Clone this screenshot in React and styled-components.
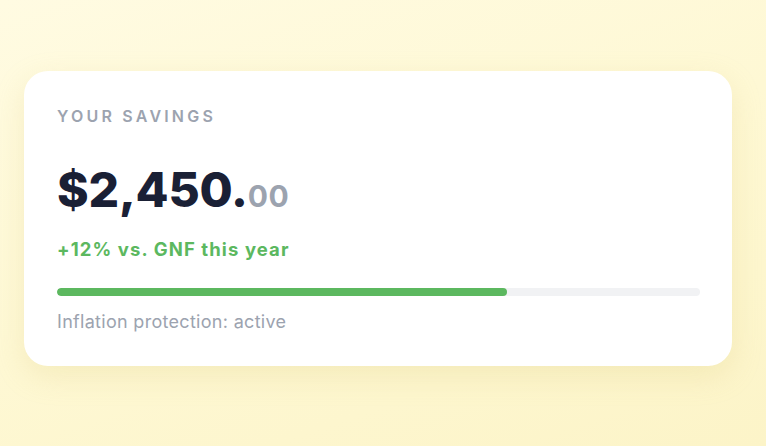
import React from "react";
import styled, { createGlobalStyle } from "styled-components";

const Global = createGlobalStyle`
  html, body { margin: 0; padding: 0; height: 100%; }
  body {
    background: linear-gradient(160deg, #fffbe2 0%, #fef8d4 50%, #fcf4c8 100%);
    font-family: Inter, "Noto Sans", sans-serif;
    -webkit-font-smoothing: antialiased;
  }
`;

const Page = styled.div`
  min-height: 446px;
  box-sizing: border-box;
  padding: 71px 34px 0 24px;
`;

const Card = styled.section`
  background: #ffffff;
  border-radius: 24px;
  box-sizing: border-box;
  height: 295px;
  padding: 35px 32px 0 33px;
  box-shadow: 0 10px 30px rgba(214, 196, 110, 0.22);
  display: flex;
  flex-direction: column;
`;

const Label = styled.div`
  font-size: 16px;
  font-weight: 600;
  letter-spacing: 3.2px;
  color: #9ca3af;
  line-height: 20px;
`;

const Amount = styled.div`
  margin-top: 36px;
  font-size: 48px;
  font-weight: 800;
  color: #1a2035;
  line-height: 56px;
  letter-spacing: -0.2px;
`;

const Cents = styled.span`
  font-size: 30px;
  font-weight: 700;
  color: #9ca3af;
  letter-spacing: 0.5px;
`;

const Change = styled.div`
  margin-top: 13px;
  font-size: 18.5px;
  font-weight: 700;
  color: #5cb85f;
  line-height: 24px;
  letter-spacing: 1.1px;
`;

const Track = styled.div`
  margin-top: 27px;
  height: 8px;
  border-radius: 4px;
  background: #f1f2f4;
  overflow: hidden;
`;

const Fill = styled.div`
  height: 100%;
  border-radius: 4px;
  background: #5cb85f;
`;

const Note = styled.div`
  margin-top: 14px;
  font-size: 18px;
  font-weight: 400;
  color: #9ca3af;
  line-height: 24px;
  letter-spacing: 0.3px;
`;

export default function App() {
  const pct = 70;
  return (
    <>
      <Global />
      <Page>
        <Card>
          <Label>YOUR SAVINGS</Label>
          <Amount>
            $2,450.<Cents>00</Cents>
          </Amount>
          <Change>+12% vs. GNF this year</Change>
          <Track>
            <Fill style={{ width: `${pct}%` }} />
          </Track>
          <Note>Inflation protection: active</Note>
        </Card>
      </Page>
    </>
  );
}
